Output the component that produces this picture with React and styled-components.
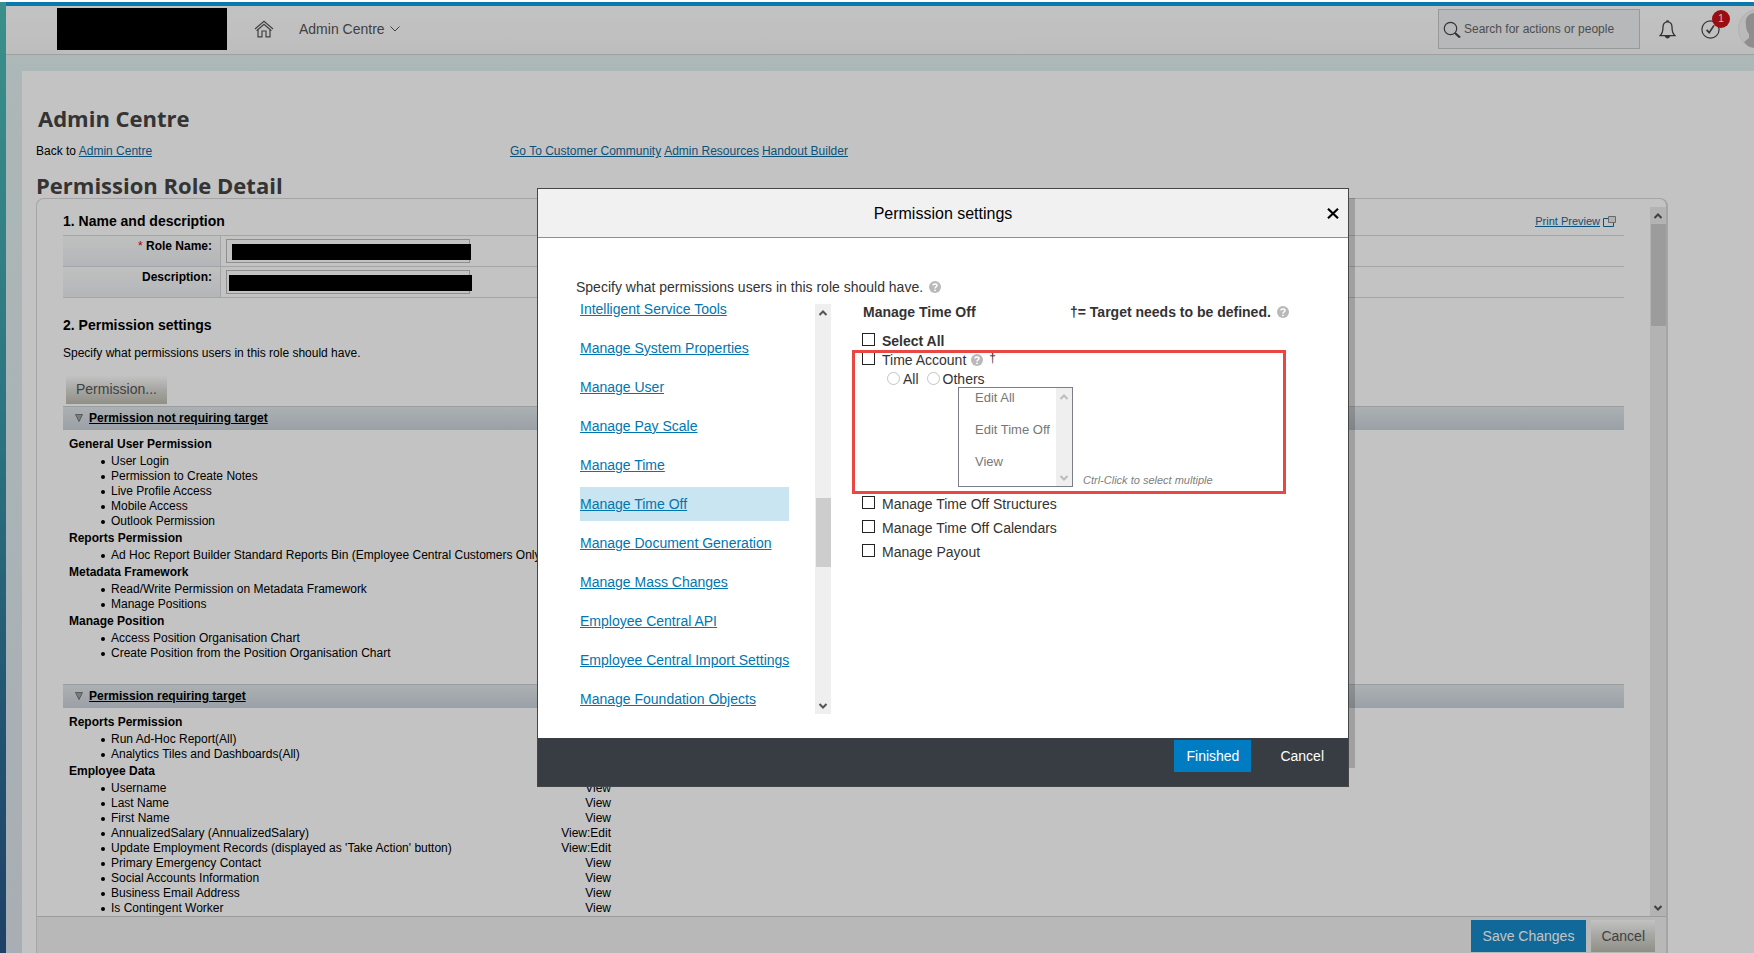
import React from 'react'
import styled, { createGlobalStyle } from 'styled-components'

const GlobalStyle = createGlobalStyle`
* {
    box-sizing: border-box;
}

body {
    margin: 0;
    overflow: hidden;
    background: #fff;
    color: #000;
    font-family: "Liberation Sans", Arial, sans-serif;
    font-size: 12px;
}

h1, h2, h3, h4, p, ul {
    margin: 0;
    padding: 0;
}

ul {
    list-style: none;
}

button, input, select {
    font-family: inherit;
}
`;

/* page shell */

const Shell = styled.div`
    display: flex;
    height: 100vh;
    padding-top: 2px;
`;

const Strip = styled.div`
    width: 6px;
    flex-shrink: 0;
    background: linear-gradient(#4ebdb6, #3a97a8 45%, #2e6f95 75%, #285587);
`;

const Page = styled.div`
    flex: 1;
    min-width: 0;
    display: flex;
    flex-direction: column;
    background: linear-gradient(#e2f1f1, #dce4ec);
`;

const Header = styled.header`
    display: flex;
    align-items: center;
    height: 53px;
    flex-shrink: 0;
    padding: 0 0 2px 51px;
    overflow: hidden;
    background: linear-gradient(#fff, #f8f8f8);
    border-top: 4px solid #109fe4;
    border-bottom: 1px solid #d2d2d2;
`;

const Logo = styled.div`
    width: 170px;
    height: 42px;
    margin-right: 27px;
    background: #000;
`;

const IconLink = styled.a`
    display: flex;
    color: #555;
`;

const ModuleButton = styled.button`
    display: flex;
    align-items: center;
    gap: 5px;
    margin: 0 auto 0 25px;
    padding: 0;
    border: 0;
    background: none;
    color: #555;
    font-size: 14px;
    line-height: 20px;
`;

const Search = styled.label`
    display: flex;
    align-items: center;
    gap: 3px;
    width: 202px;
    height: 40px;
    padding-left: 4px;
    border: 1px solid #c4cacd;
    background: #eff1f2;

    input {
        flex: 1;
        min-width: 0;
        padding: 0;
        border: 0;
        outline: 0;
        background: none;
        font-size: 12px;
    }

    input::placeholder {
        color: #666;
    }
`;

const HeaderButton = styled.button`
    position: relative;
    display: flex;
    margin-left: ${props => props.$gap}px;
    padding: 0;
    border: 0;
    background: none;
    flex-shrink: 0;
`;

const Badge = styled.span`
    position: absolute;
    top: -10px;
    left: 11px;
    width: 18px;
    border-radius: 9px;
    background: #cc1115;
    color: #fff;
    font-size: 10px;
    line-height: 18px;
    text-align: center;
`;

const Content = styled.main`
    flex: 1;
    min-height: 0;
    display: flex;
    flex-direction: column;
    margin: 16px 0 0 16px;
    padding: 34px 86px 0 14px;
    background: #fff;
`;

const Title = styled.h1`
    padding-left: ${props => props.$indent || 0}px;
    color: #444;
    font-family: "Trebuchet MS", "Open Sans", sans-serif;
    font-size: 22px;
    font-weight: 700;
    line-height: 26px;
`;

const LinkBar = styled.nav`
    display: grid;
    grid-template-columns: 474px 1fr;
    margin: 12px 0 13px;
    line-height: 16px;
`;

const PageLink = styled.a`
    color: #116b9f;
    margin-right: 3px;
`;

const Panel = styled.section`
    flex: 1;
    min-height: 0;
    display: flex;
    flex-direction: column;
    border: 1px solid #d8d8d8;
    border-width: 1px 2px 0 1px;
    border-radius: 8px 8px 0 0;
`;

const PanelScroll = styled.div`
    flex: 1;
    min-height: 0;
    display: flex;
    overflow: hidden;
`;

const PanelBody = styled.div`
    flex: 1;
    min-width: 0;
    padding: 12px 26px 0;
`;

const SectionHead = styled.div`
    display: flex;
    justify-content: space-between;
    margin-bottom: 4px;
    padding-right: 8px;
    line-height: 20px;
`;

const SectionTitle = styled.h2`
    font-size: 14px;
    line-height: 20px;
`;

const PrintLink = styled.a`
    display: flex;
    align-items: center;
    gap: 3px;
    color: #116b9f;
    font-size: 11px;
    line-height: 16px;
`;

const FieldRow = styled.div`
    display: grid;
    grid-template-columns: 158px 1fr;
    height: 31px;
    border-top: 1px solid #d6d8da;

    &:last-child {
        height: 32px;
        border-bottom: 1px solid #d6d8da;
    }
`;

const FieldLabel = styled.label`
    padding: 3px 8px 0 0;
    border-right: 1px solid #d6d8da;
    background: linear-gradient(#fbfbfb, #ebeef1);
    font-weight: bold;
    line-height: 14px;
    text-align: right;

    span {
        color: #e00000;
        font-weight: normal;
    }
`;

const Field = styled.div`
    position: relative;
    padding: 3px 5px;

    input {
        width: 244px;
        height: 24px;
        border: 1px solid #bbb;
        background: #fff;
    }
`;

const Redaction = styled.span`
    position: absolute;
    top: 8px;
    left: ${props => props.$left}px;
    width: ${props => props.$width}px;
    height: 16px;
    background: #000;
`;

const FieldTable = styled.div`
    margin: 0 0 17px;
`;

const Note = styled.p`
    margin-top: 10px;
    line-height: 16px;
`;

const GreyButton = styled.button`
    height: ${props => props.$tall ? 32 : 28}px;
    padding: 0 10px ${props => props.$tall ? 0 : 3}px;
    border: 0;
    background: linear-gradient(#fefefe, #dcdcd9 45%, #bdbcaf);
    color: #555;
    font-size: 14px;
`;

const ButtonLine = styled.div`
    display: flex;
    margin: 15px 0 2px 3px;
`;

const GroupBar = styled.h3`
    display: flex;
    align-items: center;
    height: 24px;
    padding: 0 0 2px 12px;
    border-top: 1px solid #c8cfd4;
    background: linear-gradient(#e2e7ea, #c9d2da);
    font-size: 12px;
    line-height: 14px;
`;

const GroupToggle = styled.button`
    display: flex;
    align-items: center;
    gap: 6px;
    padding: 0;
    border: 0;
    background: none;
    font-size: 12px;
    font-weight: bold;
    text-decoration: underline;
`;

const GroupBody = styled.div`
    padding: 5px 0 23px 6px;
`;

const GroupTitle = styled.h4`
    font-size: 12px;
    line-height: 19px;
`;

const PermissionItem = styled.li`
    display: flex;
    align-items: center;
    justify-content: space-between;
    width: 542px;
    padding-left: 42px;
    line-height: 15px;
    white-space: nowrap;

    &::before {
        content: '';
        width: 4px;
        height: 4px;
        margin: 0 6px 0 -10px;
        border-radius: 2px;
        background: #000;
    }

    span:first-of-type {
        flex: 1;
    }
`;

const PanelFooter = styled.footer`
    display: flex;
    justify-content: flex-end;
    gap: 5px;
    height: 37px;
    flex-shrink: 0;
    padding: 3px 11px 0 0;
    border-top: 1px solid #ccc;
    background: #f1f1f1;
`;

const PrimaryButton = styled.button`
    height: 32px;
    padding: 0 12px;
    border: 0;
    background: ${props => props.$color};
    color: #fff;
    font-size: 14px;
`;

/* scrollbars */

const Bar = styled.div`
    display: flex;
    flex-direction: column;
    align-items: center;
    width: 16px;
    flex-shrink: 0;
    margin-top: ${props => props.$top || 0}px;
    background: ${props => props.$track || '#efefef'};
`;

const Thumb = styled.span`
    width: 15px;
    margin: ${props => props.$offset}px 0 auto;
    height: ${props => props.$size}px;
    background: #cdcdcd;
`;

const ListBar = styled(Bar)`
    position: absolute;
    top: 1px;
    right: 1px;
    bottom: 1px;
    justify-content: space-between;
`;

const Arrow = ({ up, color = '#555' }) => (
    <svg width="16" height="17" viewBox="0 0 16 17" aria-hidden="true">
        <path
            d={up ? 'M4.5 11 8 7.5 11.5 11' : 'M4.5 7 8 10.5 11.5 7'}
            fill="none"
            stroke={color}
            strokeWidth="2"
        />
    </svg>
)

const ScrollBar = ({ top, offset, size, track }) => (
    <Bar $top={top} $track={track} aria-hidden="true">
        <Arrow up />
        <Thumb $offset={offset} $size={size} />
        <Arrow />
    </Bar>
)

/* dialog */

const Overlay = styled.div`
    position: fixed;
    inset: 2px 0 0;
    display: flex;
    justify-content: center;
    align-items: flex-start;
    padding: 186px 0 0 132px;
    background: rgba(0, 0, 0, 0.235);
`;

const Dialog = styled.div`
    position: relative;
    width: 812px;
    border: 1px solid #454648;
    background: #fff;
    color: #333;

    &::after {
        content: '';
        position: absolute;
        top: 9px;
        left: 100%;
        bottom: 18px;
        width: 6px;
        margin-left: 1px;
        background: rgba(0, 0, 0, 0.18);
    }
`;

const DialogHeader = styled.header`
    display: grid;
    grid-template-columns: 30px 1fr 30px;
    align-items: center;
    height: 49px;
    padding-top: 1px;
    border-bottom: 1px solid #8e8e8e;
    background: #f1f1f1;
    color: #000;
`;

const DialogTitle = styled.h2`
    grid-column: 2;
    font-size: 16px;
    font-weight: normal;
    text-align: center;
`;

const CloseButton = styled.button`
    display: flex;
    justify-content: center;
    padding: 0;
    border: 0;
    background: none;
`;

const DialogBody = styled.div`
    padding: 39px 38px 24px;
    font-size: 14px;
`;

const Intro = styled.p`
    display: flex;
    align-items: center;
    gap: 6px;
    line-height: 20px;
`;

const Columns = styled.div`
    display: flex;
    gap: 31px;
    margin: 4px 0 0 4px;
`;

const CategoryPane = styled.nav`
    display: flex;
    justify-content: space-between;
    width: 251px;
    height: 413px;
    flex-shrink: 0;
    overflow: hidden;
`;

const Category = styled.a`
    display: block;
    margin-bottom: 5px;
    padding: ${props => props.$first ? 0 : 9}px 0 9px;
    background: ${props => props.$active ? '#c9e5f1' : 'none'};
    color: #0076b0;
    line-height: 16px;
    white-space: nowrap;
`;

const SettingsPane = styled.div`
    flex: 1;
    min-width: 0;
    padding-top: 1px;
`;

const SettingsHead = styled.div`
    display: grid;
    grid-template-columns: 207px auto;
    margin-bottom: 9px;
    padding-left: 1px;
    font-weight: bold;
    line-height: 20px;

    span {
        display: flex;
        align-items: center;
        gap: 6px;
        white-space: nowrap;
    }
`;

const CheckRow = styled.div`
    display: flex;
    align-items: center;
    height: ${props => props.$compact ? 19 : 24}px;
    font-weight: ${props => props.$bold ? 'bold' : 'normal'};

    label {
        padding: 0 5px 0 7px;
        line-height: 18px;
    }

    sup {
        align-self: flex-start;
        margin-left: 6px;
        font-size: 12px;
        line-height: 16px;
    }
`;

const CheckBox = styled.input`
    appearance: none;
    width: 13px;
    height: 13px;
    margin: 0 0 3px;
    border: 1px solid #222;
    background: #fff;
`;

const TargetGroup = styled.div`
    position: relative;
    padding-bottom: 5px;
`;

const Highlight = styled.div`
    position: absolute;
    top: 0;
    left: -10px;
    width: 434px;
    height: 144px;
    border: 3px solid #e94743;
    pointer-events: none;
`;

const RadioRow = styled.div`
    display: flex;
    align-items: center;
    height: 18px;
    padding-left: 25px;

    label {
        margin: 0 8px 0 3px;
        padding-top: 1px;
    }
`;

const Radio = styled.input`
    appearance: none;
    width: 13px;
    height: 13px;
    margin: 0;
    border: 1px solid #c4c4c4;
    border-radius: 50%;
    background: #fff;
`;

const AccessRow = styled.div`
    display: flex;
    align-items: flex-end;
    gap: 10px;
    padding-left: 96px;
`;

const AccessBox = styled.div`
    position: relative;
    display: flex;
`;

const AccessSelect = styled.select`
    width: 115px;
    height: 100px;
    padding: 2px 0 0;
    overflow: hidden;
    border: 1px solid #7b7d88;
    border-radius: 0;
    background: #fff;
    font-size: 13px;
    opacity: 1;

    option {
        min-height: 0;
        padding: 0 0 17px 16px;
        color: #777;
        line-height: 16px;
    }
`;

const Hint = styled.em`
    color: #808080;
    font-size: 11px;
    line-height: 14px;
`;

const DialogFooter = styled.footer`
    display: flex;
    justify-content: flex-end;
    gap: 17px;
    height: 48px;
    padding: 2px 12px 0;
    background: #373d43;
`;

/* icons */

const HomeIcon = () => (
    <svg width="20" height="18" viewBox="0 0 20 18" fill="none" stroke="currentColor" strokeWidth="1.2">
        <path d="M1 9 10 1.2 19 9" />
        <path d="M2.6 10.8 10 4.4 17.4 10.8" />
        <path d="M4 9.8V16.8H8V11H12V16.8H16V9.8" />
    </svg>
)

const SearchIcon = () => (
    <svg width="18" height="18" viewBox="0 0 18 18" fill="none" stroke="#444">
        <circle cx="7.5" cy="8.5" r="6.2" strokeWidth="1.2" />
        <path d="M12 13 17 17.5" strokeWidth="2.2" />
    </svg>
)

const BellIcon = () => (
    <svg width="17" height="19" viewBox="0 0 17 19" fill="none" stroke="#444" strokeWidth="1.3">
        <path d="M8.5 1.8C5.4 1.8 4 4.2 4 7c0 4.6-.8 6.8-3 8.7h15c-2.2-1.9-3-4.1-3-8.7 0-2.8-1.4-5.2-4.5-5.2Z" />
        <path d="M7.2 1.2h2.6" strokeWidth="1.6" />
        <path d="M6.6 16.5a2 2 0 0 0 3.8 0Z" fill="#444" />
    </svg>
)

const TodoIcon = () => (
    <svg width="19" height="19" viewBox="0 0 19 19" fill="none" stroke="#444">
        <circle cx="9.5" cy="9.5" r="8.6" strokeWidth="1.2" />
        <path d="M5.6 9.8 8.2 12.6 13 5.4" strokeWidth="1.7" />
    </svg>
)

const Avatar = () => (
    <svg width="16" height="40" viewBox="0 0 16 40">
        <circle cx="20" cy="20" r="19.5" fill="#f3f3f3" stroke="#e8e8e8" />
        <path d="M16 4C9 5 7 10 8 16c0 4 1 6 3 9v4l-5 4c3 4 6 5 10 6Z" fill="#bababa" />
    </svg>
)

const HelpIcon = () => (
    <svg width="12" height="12" viewBox="0 0 12 12" aria-label="Help">
        <circle cx="6" cy="6" r="6" fill="#b9b9b9" />
        <path d="M4 4.6C4 2.4 8 2.4 8 4.6 8 5.9 6 5.8 6 7.4" fill="none" stroke="#fff" strokeWidth="1.5" />
        <circle cx="6" cy="9.3" r=".9" fill="#fff" />
    </svg>
)

const WindowsIcon = () => (
    <svg width="13" height="11" viewBox="0 0 13 11" fill="none">
        <path d="M.5 2.5h10v8H.5Z" stroke="#116b9f" />
        <path d="M5.5.5h7v6h-7Z" fill="#e8e8e8" stroke="#8a8a8a" />
    </svg>
)

const Triangle = () => (
    <svg width="8" height="8" viewBox="0 0 8 8">
        <path d="M.5.5h7L4 7.5Z" fill="#a4a4a4" stroke="#777" />
    </svg>
)

const targetless = [
    { title: 'General User Permission', items: [['User Login'], ['Permission to Create Notes'], ['Live Profile Access'], ['Mobile Access'], ['Outlook Permission']] },
    { title: 'Reports Permission', items: [['Ad Hoc Report Builder Standard Reports Bin (Employee Central Customers Only)']] },
    { title: 'Metadata Framework', items: [['Read/Write Permission on Metadata Framework'], ['Manage Positions']] },
    { title: 'Manage Position', items: [['Access Position Organisation Chart'], ['Create Position from the Position Organisation Chart']] },
]

const targeted = [
    { title: 'Reports Permission', items: [['Run Ad-Hoc Report(All)'], ['Analytics Tiles and Dashboards(All)']] },
    {
        title: 'Employee Data',
        items: [
            ['Username', 'View'],
            ['Last Name', 'View'],
            ['First Name', 'View'],
            ['AnnualizedSalary (AnnualizedSalary)', 'View:Edit'],
            ["Update Employment Records (displayed as 'Take Action' button)", 'View:Edit'],
            ['Primary Emergency Contact', 'View'],
            ['Social Accounts Information', 'View'],
            ['Business Email Address', 'View'],
            ['Is Contingent Worker', 'View'],
        ],
    },
]

const categories = [
    'Intelligent Service Tools',
    'Manage System Properties',
    'Manage User',
    'Manage Pay Scale',
    'Manage Time',
    'Manage Time Off',
    'Manage Document Generation',
    'Manage Mass Changes',
    'Employee Central API',
    'Employee Central Import Settings',
    'Manage Foundation Objects',
]

const PermissionGroup = ({ title, groups }) => (
    <>
        <GroupBar>
            <GroupToggle type="button"><Triangle />{title}</GroupToggle>
        </GroupBar>
        <GroupBody>
            {groups.map(group => (
                <div key={group.title}>
                    <GroupTitle>{group.title}</GroupTitle>
                    <ul>
                        {group.items.map(([name, access]) => (
                            <PermissionItem key={name}>
                                <span>{name}</span>
                                {access && <span>{access}</span>}
                            </PermissionItem>
                        ))}
                    </ul>
                </div>
            ))}
        </GroupBody>
    </>
)

const Check = ({ id, label, children, ...rest }) => (
    <CheckRow {...rest}>
        <CheckBox type="checkbox" id={id} />
        <label htmlFor={id}>{label}</label>
        {children}
    </CheckRow>
)

const TopBar = () => (
    <Header>
        <Logo />
        <IconLink href="#home" aria-label="Home"><HomeIcon /></IconLink>
        <ModuleButton type="button">
            Admin Centre
            <svg width="10" height="6" viewBox="0 0 10 6" fill="none" stroke="currentColor">
                <path d="M.5.5 5 5 9.5.5" />
            </svg>
        </ModuleButton>
        <Search>
            <SearchIcon />
            <input type="text" placeholder="Search for actions or people" aria-label="Search" />
        </Search>
        <HeaderButton type="button" $gap={19} aria-label="Notifications"><BellIcon /></HeaderButton>
        <HeaderButton type="button" $gap={25} aria-label="To do"><TodoIcon /><Badge>1</Badge></HeaderButton>
        <HeaderButton type="button" $gap={18} aria-label="Profile"><Avatar /></HeaderButton>
    </Header>
)

const RoleDetail = () => (
    <Panel>
        <PanelScroll>
            <PanelBody>
                <SectionHead>
                    <SectionTitle>1. Name and description</SectionTitle>
                    <PrintLink href="#print"><u>Print Preview</u><WindowsIcon /></PrintLink>
                </SectionHead>
                <FieldTable>
                    <FieldRow>
                        <FieldLabel htmlFor="role"><span>*</span> Role Name:</FieldLabel>
                        <Field><input id="role" type="text" /><Redaction $left={11} $width={239} /></Field>
                    </FieldRow>
                    <FieldRow>
                        <FieldLabel htmlFor="description">Description:</FieldLabel>
                        <Field><input id="description" type="text" /><Redaction $left={8} $width={243} /></Field>
                    </FieldRow>
                </FieldTable>
                <SectionTitle>2. Permission settings</SectionTitle>
                <Note>Specify what permissions users in this role should have.</Note>
                <ButtonLine><GreyButton type="button">Permission...</GreyButton></ButtonLine>
                <PermissionGroup title="Permission not requiring target" groups={targetless} />
                <PermissionGroup title="Permission requiring target" groups={targeted} />
            </PanelBody>
            <ScrollBar top={8} offset={0} size={102} track="#ebebeb" />
        </PanelScroll>
        <PanelFooter>
            <PrimaryButton type="button" $color="#158ac8">Save Changes</PrimaryButton>
            <GreyButton type="button" $tall>Cancel</GreyButton>
        </PanelFooter>
    </Panel>
)

const PermissionDialog = () => (
    <Overlay>
        <Dialog role="dialog" aria-labelledby="dialog-title">
            <DialogHeader>
                <DialogTitle id="dialog-title">Permission settings</DialogTitle>
                <CloseButton type="button" aria-label="Close">
                    <svg width="12" height="11" viewBox="0 0 12 11" stroke="#000" strokeWidth="2.2">
                        <path d="M1 .8 11 10.2M11 .8 1 10.2" />
                    </svg>
                </CloseButton>
            </DialogHeader>
            <DialogBody>
                <Intro>Specify what permissions users in this role should have. <HelpIcon /></Intro>
                <Columns>
                    <CategoryPane>
                        <ul>
                            {categories.map((name, i) => (
                                <li key={name}>
                                    <Category href="#category" $first={i === 0} $active={name === 'Manage Time Off'}>{name}</Category>
                                </li>
                            ))}
                        </ul>
                        <ScrollBar top={3} offset={177} size={69} />
                    </CategoryPane>
                    <SettingsPane>
                        <SettingsHead>
                            <span>Manage Time Off</span>
                            <span>†= Target needs to be defined. <HelpIcon /></span>
                        </SettingsHead>
                        <Check id="all" label="Select All" $compact $bold />
                        <TargetGroup>
                            <Check id="account" label="Time Account" $compact>
                                <HelpIcon />
                                <sup>†</sup>
                            </Check>
                            <RadioRow>
                                <Radio type="radio" id="target-all" name="target" disabled />
                                <label htmlFor="target-all">All</label>
                                <Radio type="radio" id="target-others" name="target" disabled />
                                <label htmlFor="target-others">Others</label>
                            </RadioRow>
                            <AccessRow>
                                <AccessBox>
                                    <AccessSelect multiple disabled size={3} aria-label="Access">
                                        <option>Edit All</option>
                                        <option>Edit Time Off</option>
                                        <option>View</option>
                                    </AccessSelect>
                                    <ListBar aria-hidden="true">
                                        <Arrow up color="#bcbcbc" />
                                        <Arrow color="#bcbcbc" />
                                    </ListBar>
                                </AccessBox>
                                <Hint>Ctrl-Click to select multiple</Hint>
                            </AccessRow>
                            <Highlight />
                        </TargetGroup>
                        <Check id="structures" label="Manage Time Off Structures" />
                        <Check id="calendars" label="Manage Time Off Calendars" />
                        <Check id="payout" label="Manage Payout" />
                    </SettingsPane>
                </Columns>
            </DialogBody>
            <DialogFooter>
                <PrimaryButton type="button" $color="#007cc3">Finished</PrimaryButton>
                <PrimaryButton type="button" $color="transparent">Cancel</PrimaryButton>
            </DialogFooter>
        </Dialog>
    </Overlay>
)

export default function App() {
    return (
        <>
            <GlobalStyle />
            <Shell>
                <Strip />
                <Page>
                    <TopBar />
                    <Content>
                        <Title $indent={2}>Admin Centre</Title>
                        <LinkBar>
                            <div>Back to <PageLink href="#admin">Admin Centre</PageLink></div>
                            <div>
                                <PageLink href="#community">Go To Customer Community</PageLink>
                                <PageLink href="#resources">Admin Resources</PageLink>
                                <PageLink href="#handout">Handout Builder</PageLink>
                            </div>
                        </LinkBar>
                        <Title>Permission Role Detail</Title>
                        <RoleDetail />
                    </Content>
                </Page>
            </Shell>
            <PermissionDialog />
        </>
    )
}
